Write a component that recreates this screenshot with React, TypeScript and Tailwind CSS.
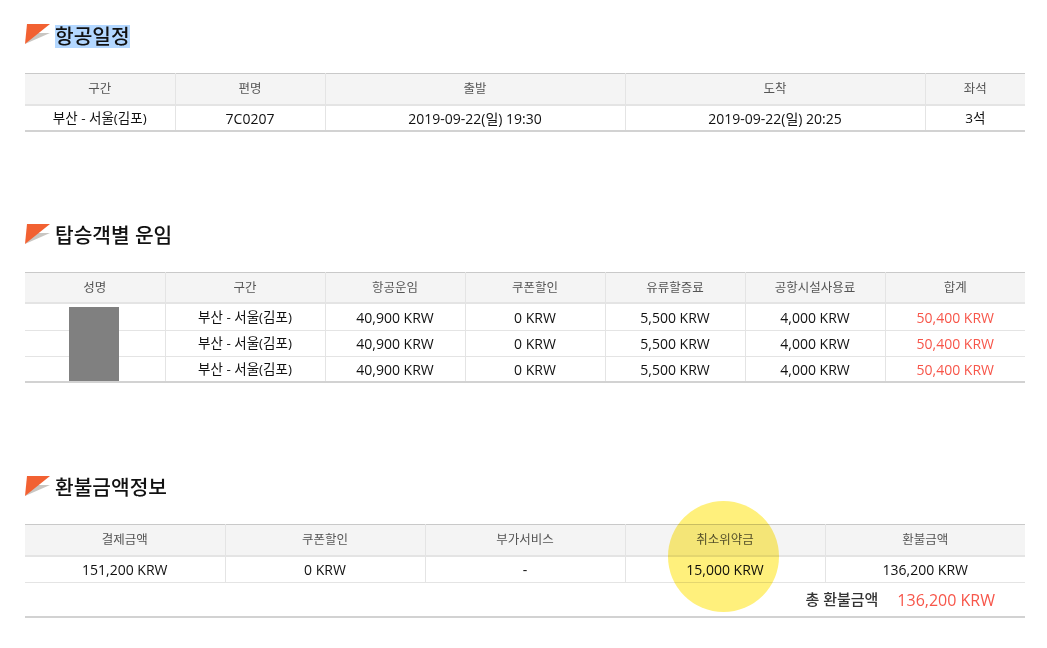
function Flag() {
  return (
    <svg width="25" height="20" viewBox="0 0 25 20" className="shrink-0">
      <polygon points="0,20 25,9 11,9" fill="#c9c6c2" />
      <polygon points="2,0 25,0 0,20" fill="#f26132" />
    </svg>
  );
}

function Title({ text, selected }: { text: string; selected?: boolean }) {
  return (
    <div className="flex items-start h-[24px] gap-[5px]">
      <Flag />
      <h2
        className={
          "text-[20.3px] leading-[23px] text-[#111] font-medium " +
          (selected ? "mt-px bg-[#b3d7ff]" : "mt-0")
        }
      >
        {text}
      </h2>
    </div>
  );
}

function Table({
  widths,
  heads,
  rows,
  red,
  lightEnd,
}: {
  widths: number[];
  heads: string[];
  rows: string[][];
  red?: boolean;
  lightEnd?: boolean;
}) {
  return (
    <table className="w-[1000px] table-fixed border-collapse text-[14px]">
      <colgroup>
        {widths.map((w, i) => (
          <col key={i} style={{ width: w }} />
        ))}
      </colgroup>
      <thead>
        <tr className="h-[31px] bg-[#f4f4f4] border-t border-t-[#c9c9c9] border-b-2 border-b-[#e4e4e4]">
          {heads.map((h, i) => (
            <th
              key={i}
              className="text-[12.5px] font-normal text-[#555] text-center border-l border-[#e4e4e4] first:border-l-0 p-0 pt-[2px]"
            >
              {h}
            </th>
          ))}
        </tr>
      </thead>
      <tbody>
        {rows.map((r, i) => (
          <tr
            key={i}
            className={
              (i === 0 && (lightEnd || rows.length > 1) ? "h-[27px] " : "h-[26px] ") +
              "border-b border-[#e4e4e4] " +
              (lightEnd ? "" : "last:border-b-2 last:border-b-[#d2d2d2]")
            }
          >
            {r.map((c, j) => (
              <td
                key={j}
                className={
                  "text-center text-[#111] border-l border-[#e4e4e4] first:border-l-0 p-0 pt-px " +
                  (red && j === r.length - 1 ? "text-[#f7564a] " : "") +
                  (c.includes("김포") || c === "3석" ? "text-[13.5px]" : "")
                }
              >
                {c}
              </td>
            ))}
          </tr>
        ))}
      </tbody>
    </table>
  );
}

const fareRow = ["", "부산 - 서울(김포)", "40,900 KRW", "0 KRW", "5,500 KRW", "4,000 KRW", "50,400 KRW"];

export default function App() {
  return (
    <div
      className="relative w-[1047px] h-[648px] overflow-hidden bg-white pl-[25px] pt-[24px]"
      style={{ fontFamily: '"Open Sans", "Noto Sans CJK KR", sans-serif' }}
    >
      <Title text="항공일정" selected />
      <div className="mt-[25px]">
        <Table
          widths={[150, 150, 300, 300, 100]}
          heads={["구간", "편명", "출발", "도착", "좌석"]}
          rows={[["부산 - 서울(김포)", "7C0207", "2019-09-22(일) 19:30", "2019-09-22(일) 20:25", "3석"]]}
        />
      </div>

      <div className="mt-[92px]">
        <Title text="탑승객별 운임" />
      </div>
      <div className="relative mt-[24px]">
        <Table
          widths={[140, 160, 140, 140, 140, 140, 140]}
          heads={["성명", "구간", "항공운임", "쿠폰할인", "유류할증료", "공항시설사용료", "합계"]}
          rows={[fareRow, fareRow, fareRow]}
          red
        />
        <div className="absolute left-[44px] top-[35px] w-[50px] h-[74px] bg-[#808080]" />
      </div>

      <div className="mt-[93px]">
        <Title text="환불금액정보" />
      </div>
      <div className="mt-[24px] w-[1000px]">
        <Table
          widths={[200, 200, 200, 200, 200]}
          heads={["결제금액", "쿠폰할인", "부가서비스", "취소위약금", "환불금액"]}
          rows={[["151,200 KRW", "0 KRW", "-", "15,000 KRW", "136,200 KRW"]]}
          lightEnd
        />
        <div className="flex items-center justify-end h-[35px] pr-[30px] border-b-2 border-[#d2d2d2]">
          <span className="text-[15px] font-medium text-[#333] mr-[19px]">총 환불금액</span>
          <span className="text-[16px] text-[#f7564a]">136,200 KRW</span>
        </div>
      </div>

      <div className="absolute left-[668px] top-[501px] w-[111px] h-[111px] rounded-full bg-[#fff07c] mix-blend-multiply" />
    </div>
  );
}
